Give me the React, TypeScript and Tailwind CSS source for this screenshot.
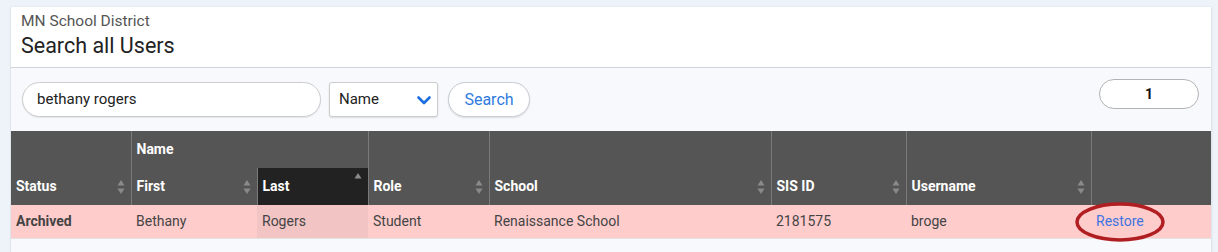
import React from "react";

function SortIcon({ mode = "both" }: { mode?: "both" | "asc" }) {
  return (
    <svg width="8" height="16" viewBox="0 0 8 16" className="shrink-0">
      <path d="M4 1 L7.5 6.5 L0.5 6.5 Z" fill="#8a8a8a" />
      {mode === "both" && <path d="M4 15 L7.5 9.5 L0.5 9.5 Z" fill="#8a8a8a" />}
    </svg>
  );
}

function HeadCell({ label, sort }: { label: string; sort?: "both" | "asc" }) {
  return (
    <th className="h-[37px] border-r border-[#7a7a7a] p-0 align-bottom">
      <div className="flex h-[37px] items-center justify-between pl-[5px] pr-[6px] text-left text-[14px] font-bold text-white">
        <span>{label}</span>
        {sort && <SortIcon mode={sort} />}
      </div>
    </th>
  );
}

export default function App() {
  const cols = [120, 126, 111, 121, 282, 135, 185, 120];

  return (
    <div className="min-h-[252px] bg-[#eef2f9] pl-[10px] pt-[7px] font-['Roboto',sans-serif]">
      <div className="w-[1201px] border-l border-[#e0e4ec] shadow-[1px_0_2px_rgba(0,0,0,0.08)]">
        <div className="h-[61px] border-b border-[#cfd2d8] bg-white pl-[10px] pt-[4px]">
          <div className="text-[15.5px] leading-[20px] text-[#555555]">MN School District</div>
          <div className="mt-[1px] text-[21.5px] leading-[28px] text-[#222222]">Search all Users</div>
        </div>

        <div className="bg-[#f7f9fd] pb-[14px]">
          <div className="flex items-start pl-[11px] pr-[11px] pt-[11px]">
            <div className="mt-[3px] flex h-[35px] w-[299px] items-center rounded-full border border-[#cccccc] bg-white pl-[14px] text-[15px] text-[#222222] shadow-[0_1px_1px_rgba(0,0,0,0.08)]">
              bethany rogers
            </div>
            <div className="ml-[8px] mt-[3px] flex h-[35px] w-[109px] items-center justify-between rounded-[3px] border border-[#cccccc] bg-white pl-[9px] pr-[4px] text-[15px] text-[#222222] shadow-[0_1px_2px_rgba(0,0,0,0.12)]">
              <span>Name</span>
              <svg width="18" height="18" viewBox="0 0 18 18">
                <path d="M3.5 6.5 L9 12 L14.5 6.5" stroke="#1a6fe0" strokeWidth="2.6" fill="none" strokeLinecap="round" strokeLinejoin="round" />
              </svg>
            </div>
            <button className="ml-[10px] mt-[3px] flex h-[35px] w-[82px] items-center justify-center rounded-full border border-[#c8ccd4] bg-white text-[16px] text-[#2f7be0] shadow-[0_1px_2px_rgba(0,0,0,0.12)]">
              Search
            </button>
            <div className="ml-auto mr-[1px] flex h-[30px] w-[100px] items-center justify-center rounded-full border border-[#b3b3b3] bg-white text-[14px] font-bold text-[#111111]">
              1
            </div>
          </div>

          <table className="mt-[14px] w-[1200px] table-fixed border-collapse">
            <colgroup>
              {cols.map((w, i) => (
                <col key={i} style={{ width: w }} />
              ))}
            </colgroup>
            <thead className="bg-[#555555]">
              <tr>
                <th rowSpan={2} className="border-r border-[#7a7a7a] p-0 align-bottom">
                  <div className="flex h-[37px] items-center justify-between pl-[5px] pr-[6px] text-left text-[14px] font-bold text-white">
                    <span>Status</span>
                    <SortIcon />
                  </div>
                </th>
                <th colSpan={2} className="h-[37px] border-r border-[#7a7a7a] p-0 pl-[5px] text-left text-[14px] font-bold text-white">
                  Name
                </th>
                {["Role", "School", "SIS ID", "Username"].map((l) => (
                  <th key={l} rowSpan={2} className="border-r border-[#7a7a7a] p-0 align-bottom">
                    <div className="flex h-[37px] items-center justify-between pl-[5px] pr-[6px] text-left text-[14px] font-bold text-white">
                      <span>{l}</span>
                      <SortIcon />
                    </div>
                  </th>
                ))}
                <th rowSpan={2} className="p-0" />
              </tr>
              <tr>
                <HeadCell label="First" sort="both" />
                <th className="h-[37px] border-r border-[#7a7a7a] bg-[#222222] p-0">
                  <div className="relative flex h-[37px] items-center pl-[5px] pr-[6px] text-left text-[14px] font-bold text-white">
                    <span>Last</span>
                    <span className="absolute right-[6px] top-[4px]">
                      <SortIcon mode="asc" />
                    </span>
                  </div>
                </th>
              </tr>
            </thead>
            <tbody>
              <tr className="h-[33px] border-b border-[#e2e2e2] bg-[#ffcccc] text-[14px] text-[#444444]">
                <td className="pl-[5px] font-bold">Archived</td>
                <td className="pl-[5px]">Bethany</td>
                <td className="bg-[#f2c4c4] pl-[5px]">Rogers</td>
                <td className="pl-[5px]">Student</td>
                <td className="pl-[5px]">Renaissance School</td>
                <td className="pl-[5px]">2181575</td>
                <td className="pl-[5px]">broge</td>
                <td className="pl-[5px]">
                  <div className="relative inline-flex h-[33px] items-center">
                    <span className="text-[#3d74e0]">Restore</span>
                    <svg
                      className="pointer-events-none absolute left-[-22px] top-[-3px]"
                      width="92"
                      height="42"
                      viewBox="0 0 92 42"
                    >
                      <ellipse cx="46" cy="20" rx="43" ry="18" fill="none" stroke="#b01e22" strokeWidth="3.5" />
                    </svg>
                  </div>
                </td>
              </tr>
            </tbody>
          </table>
        </div>
      </div>
    </div>
  );
}
